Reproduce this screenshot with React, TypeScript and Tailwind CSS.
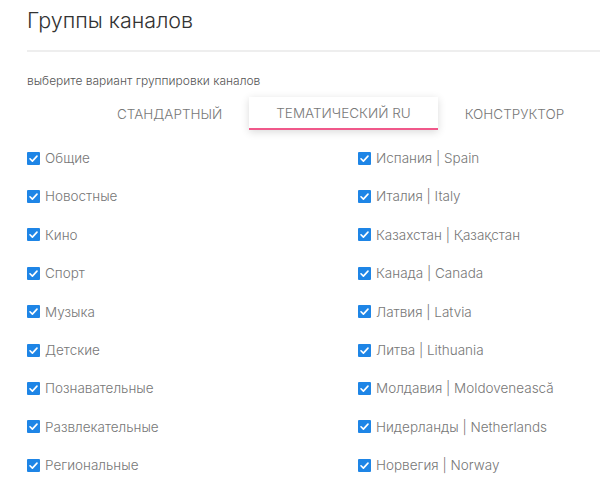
import React from 'react';

const LEFT = ["Общие", "Новостные", "Кино", "Спорт", "Музыка", "Детские", "Познавательные", "Развлекательные", "Региональные"];
const RIGHT = ["Испания | Spain", "Италия | Italy", "Казахстан | Қазақстан", "Канада | Canada", "Латвия | Latvia", "Литва | Lithuania", "Молдавия | Moldovenească", "Нидерланды | Netherlands", "Норвегия | Norway"];
const TABS = ["СТАНДАРТНЫЙ", "ТЕМАТИЧЕСКИЙ RU", "КОНСТРУКТОР"];

function Check({ label }: { label: string }) {
    return (
        <label className="flex items-center h-[38.4px] gap-[5px] text-[13.5px] font-light text-[#777] cursor-pointer whitespace-nowrap">
            <span className="w-[13px] h-[13px] rounded-[1px] bg-[#1e85e6] flex items-center justify-center shrink-0">
                <svg viewBox="0 0 12 12" className="w-[11px] h-[11px]">
                    <path d="M2.2 6.3 L4.8 8.8 L9.8 3.4" fill="none" stroke="white" strokeWidth="1.8" strokeLinecap="round" strokeLinejoin="round" />
                </svg>
            </span>
            <span>{label}</span>
        </label>
    );
}

export default function App() {
    return (
        <div className="w-[600px] h-[483px] overflow-hidden bg-white pl-[27px] font-['Inter',sans-serif]">
            <h1 className="pt-[6px] text-[21.5px] leading-[28px] text-[#333] font-light">Группы каналов</h1>
            <div className="mt-[16px] h-[2px] bg-[#eeeeee]" />
            <p className="mt-[21px] text-[12px] leading-[16px] font-light text-[#555]">выберите вариант группировки каналов</p>
            <div className="flex mt-[8px] ml-[63px]">
                {TABS.map((t, i) => (
                    <div
                        key={t}
                        className={`px-[27px] h-[33px] pt-[2px] flex items-center whitespace-nowrap text-[13.5px] font-light text-[#777] ${i === 1 ? 'bg-white shadow-[0_2px_8px_rgba(0,0,0,0.15)] border-b-2 border-[#f0588a]' : ''}`}
                    >
                        {t}
                    </div>
                ))}
            </div>
            <div className="grid grid-cols-[331px_1fr] mt-[9px]">
                <div className="flex flex-col">
                    {LEFT.map((l) => <Check key={l} label={l} />)}
                </div>
                <div className="flex flex-col">
                    {RIGHT.map((l) => <Check key={l} label={l} />)}
                </div>
            </div>
        </div>
    );
}
